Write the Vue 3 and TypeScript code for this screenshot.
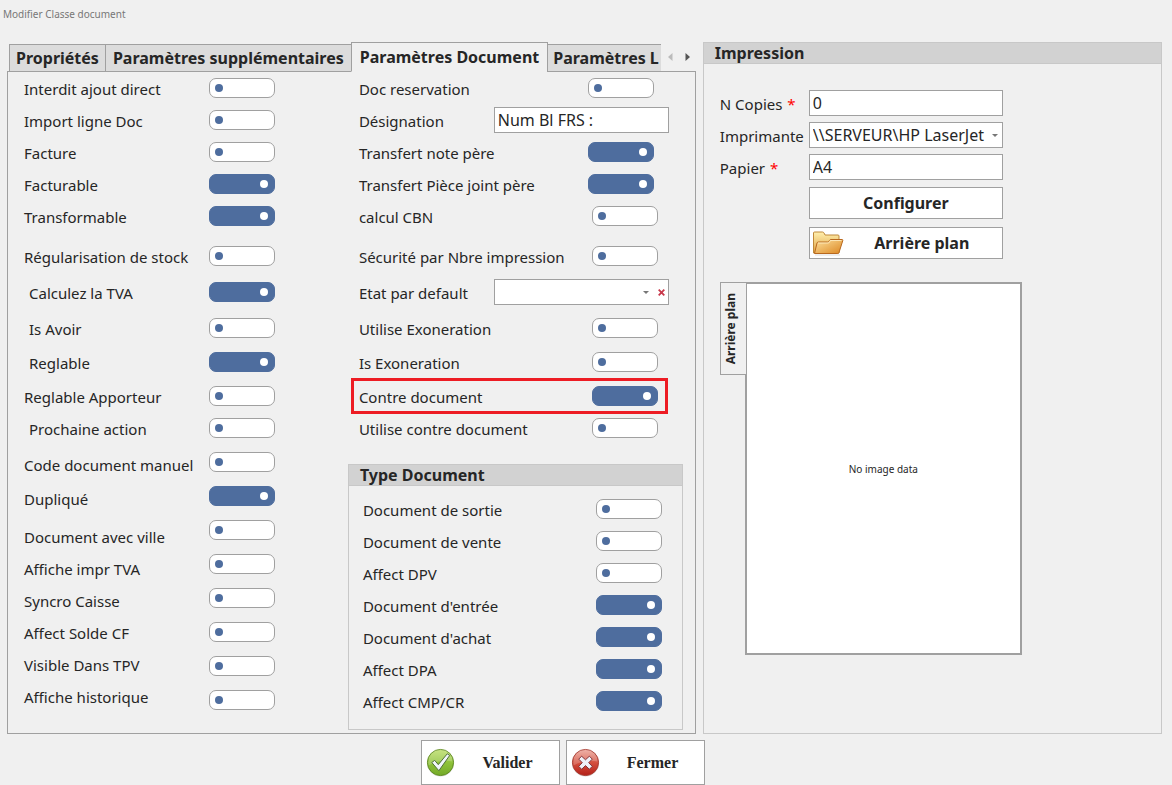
<script setup lang="ts">
import { reactive, ref } from 'vue'

type Gap = 'none' | 'xs' | 'sm' | 'md' | 'lg' | 'xl'

interface Option {
  id: string
  label: string
  on: boolean
  labelGap: Gap
  toggleGap: Gap
  indent?: boolean
}

interface Row {
  id: string
  label: string
  kind: 'toggle' | 'text' | 'combo'
  on: boolean
  gap: Gap
  wide?: boolean
  highlight?: boolean
}

const options = reactive<Option[]>([
  { id: 'interdit', label: 'Interdit ajout direct', on: false, labelGap: 'none', toggleGap: 'none' },
  { id: 'import', label: 'Import ligne Doc', on: false, labelGap: 'xs', toggleGap: 'xs' },
  { id: 'facture', label: 'Facture', on: false, labelGap: 'xs', toggleGap: 'xs' },
  { id: 'facturable', label: 'Facturable', on: true, labelGap: 'xs', toggleGap: 'xs' },
  { id: 'transformable', label: 'Transformable', on: true, labelGap: 'xs', toggleGap: 'xs' },
  { id: 'regul', label: 'Régularisation de stock', on: false, labelGap: 'xl', toggleGap: 'xl' },
  { id: 'tva', label: 'Calculez la TVA', on: true, labelGap: 'md', toggleGap: 'md', indent: true },
  { id: 'avoir', label: 'Is Avoir', on: false, labelGap: 'md', toggleGap: 'md', indent: true },
  { id: 'reglable', label: 'Reglable', on: true, labelGap: 'sm', toggleGap: 'sm', indent: true },
  { id: 'apporteur', label: 'Reglable Apporteur', on: false, labelGap: 'sm', toggleGap: 'sm' },
  { id: 'prochaine', label: 'Prochaine action', on: false, labelGap: 'xs', toggleGap: 'xs', indent: true },
  { id: 'code', label: 'Code document manuel', on: false, labelGap: 'md', toggleGap: 'sm' },
  { id: 'duplique', label: 'Dupliqué', on: true, labelGap: 'sm', toggleGap: 'sm' },
  { id: 'ville', label: 'Document avec ville', on: false, labelGap: 'lg', toggleGap: 'sm' },
  { id: 'impr', label: 'Affiche impr TVA', on: false, labelGap: 'xs', toggleGap: 'sm' },
  { id: 'syncro', label: 'Syncro Caisse', on: false, labelGap: 'xs', toggleGap: 'sm' },
  { id: 'solde', label: 'Affect Solde CF', on: false, labelGap: 'xs', toggleGap: 'sm' },
  { id: 'tpv', label: 'Visible Dans TPV', on: false, labelGap: 'xs', toggleGap: 'sm' },
  { id: 'historique', label: 'Affiche historique', on: false, labelGap: 'xs', toggleGap: 'sm' },
])

const rows = reactive<Row[]>([
  { id: 'reservation', label: 'Doc reservation', kind: 'toggle', on: false, gap: 'none', wide: true },
  { id: 'designation', label: 'Désignation', kind: 'text', on: false, gap: 'xs' },
  { id: 'note', label: 'Transfert note père', kind: 'toggle', on: true, gap: 'xs', wide: true },
  { id: 'piece', label: 'Transfert Pièce joint père', kind: 'toggle', on: true, gap: 'xs', wide: true },
  { id: 'cbn', label: 'calcul CBN', kind: 'toggle', on: false, gap: 'xs' },
  { id: 'securite', label: 'Sécurité par Nbre impression', kind: 'toggle', on: false, gap: 'xl' },
  { id: 'etat', label: 'Etat par default', kind: 'combo', on: false, gap: 'md' },
  { id: 'utilise-exo', label: 'Utilise Exoneration', kind: 'toggle', on: false, gap: 'md' },
  { id: 'is-exo', label: 'Is Exoneration', kind: 'toggle', on: false, gap: 'sm' },
  { id: 'contre', label: 'Contre document', kind: 'toggle', on: true, gap: 'sm', highlight: true },
  { id: 'utilise-contre', label: 'Utilise contre document', kind: 'toggle', on: false, gap: 'xs' },
])

const types = reactive([
  { id: 'sortie', label: 'Document de sortie', on: false },
  { id: 'vente', label: 'Document de vente', on: false },
  { id: 'dpv', label: 'Affect DPV', on: false },
  { id: 'entree', label: "Document d'entrée", on: true },
  { id: 'achat', label: "Document d'achat", on: true },
  { id: 'dpa', label: 'Affect DPA', on: true },
  { id: 'cmp', label: 'Affect CMP/CR', on: true },
])

const designation = ref('Num Bl FRS :')
const etat = ref('')
const copies = ref('0')
const printer = ref('\\\\SERVEUR\\HP LaserJet')
const paper = ref('A4')
</script>

<template>
  <main class="window">
    <h1 class="title">Modifier Classe document</h1>

    <div class="columns">
      <section class="settings">
        <div class="tabbar">
          <div class="tabs" role="tablist">
            <button class="tab" type="button" role="tab" aria-selected="false">Propriétés</button>
            <button class="tab" type="button" role="tab" aria-selected="false">Paramètres supplémentaires</button>
            <button class="tab active" type="button" role="tab" aria-selected="true">Paramètres Document</button>
            <button class="tab" type="button" role="tab" aria-selected="false">Paramètres L</button>
          </div>
          <div class="scrollers">
            <button class="scroller dim" type="button" aria-label="Onglet précédent">
              <svg width="5" height="8" viewBox="0 0 5 8"><path d="M4.5 0v8L0 4z" fill="currentColor" /></svg>
            </button>
            <button class="scroller" type="button" aria-label="Onglet suivant">
              <svg width="5" height="8" viewBox="0 0 5 8"><path d="M.5 0v8L5 4z" fill="currentColor" /></svg>
            </button>
          </div>
        </div>

        <div class="panel" role="tabpanel">
          <div class="left">
            <div class="stack">
              <label
                v-for="o in options"
                :key="o.id"
                :for="o.id"
                class="cell text"
                :class="['gap-' + o.labelGap, { indent: o.indent }]"
              >{{ o.label }}</label>
            </div>
            <div class="stack">
              <div v-for="o in options" :key="o.id" class="cell" :class="'gap-' + o.toggleGap">
                <input :id="o.id" v-model="o.on" class="toggle" type="checkbox" />
              </div>
            </div>
          </div>

          <div class="middle">
            <div class="rows">
              <div
                v-for="r in rows"
                :key="r.id"
                class="row"
                :class="['gap-' + r.gap, { highlight: r.highlight, wide: r.wide }]"
              >
                <label class="text" :for="r.id">{{ r.label }}</label>
                <input v-if="r.kind === 'toggle'" :id="r.id" v-model="r.on" class="toggle" type="checkbox" />
                <input v-else-if="r.kind === 'text'" :id="r.id" v-model="designation" class="field" type="text" />
                <div v-else class="combo">
                  <select :id="r.id" v-model="etat" class="field">
                    <option value=""></option>
                  </select>
                  <svg class="caret with-clear" width="6" height="3" viewBox="0 0 6 3"><path d="M0 0h6L3 3z" fill="#777" /></svg>
                  <button class="clear" type="button" aria-label="Effacer">
                    <svg width="7" height="7" viewBox="0 0 7 7"><path d="M.7.7l5.600 5.600M6.300.7L.7 6.300" stroke="#c8384a" stroke-width="1.800" /></svg>
                  </button>
                </div>
              </div>
            </div>

            <section class="group type-group">
              <h2 class="group-title">Type Document</h2>
              <div class="type-rows">
                <div v-for="t in types" :key="t.id" class="type-row">
                  <label class="text" :for="t.id">{{ t.label }}</label>
                  <input :id="t.id" v-model="t.on" class="toggle" type="checkbox" />
                </div>
              </div>
            </section>
          </div>
        </div>
      </section>

      <section class="group printing">
        <h2 class="group-title">Impression</h2>
        <div class="print-body">
          <div class="form">
            <label class="text" for="copies">N Copies <span class="req">*</span></label>
            <input id="copies" v-model="copies" class="field" type="text" />
            <label class="text" for="printer">Imprimante</label>
            <div class="combo">
              <select id="printer" v-model="printer" class="field">
                <option>\\SERVEUR\HP LaserJet</option>
              </select>
              <svg class="caret" width="6" height="3" viewBox="0 0 6 3"><path d="M0 0h6L3 3z" fill="#777" /></svg>
            </div>
            <label class="text" for="paper">Papier <span class="req">*</span></label>
            <input id="paper" v-model="paper" class="field" type="text" />
            <div class="buttons">
              <button class="button" type="button">Configurer</button>
              <button class="button with-icon" type="button">
                <svg width="32" height="26" viewBox="0 0 32 26">
                  <defs>
                    <linearGradient id="folder-back" x1="0" y1="0" x2="0" y2="1">
                      <stop offset="0" stop-color="#fff0ae" /><stop offset="1" stop-color="#e0a040" />
                    </linearGradient>
                    <linearGradient id="folder-front" x1="0" y1="0" x2="1" y2="1">
                      <stop offset="0" stop-color="#fde3a0" /><stop offset="1" stop-color="#dc8620" />
                    </linearGradient>
                  </defs>
                  <path d="M2 25h25" stroke="#ddd" stroke-width="1" />
                  <path d="M.5 23V3q0-1 1-1h8q1 0 1.500 1l1 2h13q1 0 1 1v17z" fill="url(#folder-back)" stroke="#bf8838" />
                  <path d="M1.500 23.500L4 13q.3-1 1.500-1h9q1 0 1.500-.8l.6-.9q.4-.8 1.400-.8h11q1 0 .8 1L26 22.500q-.3 1-1.300 1z" fill="url(#folder-front)" stroke="#b8681e" />
                  <path d="M5 13h10q1 0 1.600-1l.6-1.500H28.500" fill="none" stroke="#fff0c8" stroke-width=".8" />
                </svg>
                <span>Arrière plan</span>
              </button>
            </div>
          </div>

          <div class="preview">
            <button class="side-tab" type="button"><span>Arrière plan</span></button>
            <div class="canvas">No image data</div>
          </div>
        </div>
      </section>
    </div>

    <footer class="actions">
      <button class="action" type="button">
        <svg width="29" height="29" viewBox="0 0 30 30">
          <defs>
            <linearGradient id="ok" x1="0" y1="0" x2="0" y2="1">
              <stop offset="0" stop-color="#b9dc62" /><stop offset=".5" stop-color="#8fc23a" /><stop offset="1" stop-color="#74aa28" />
            </linearGradient>
          </defs>
          <circle cx="15" cy="15.500" r="14" fill="#ddd" />
          <circle cx="15" cy="15" r="13.500" fill="url(#ok)" stroke="#5f8b20" />
          <path d="M2.500 14a12.500 12.500 0 0 1 25 0q-12-3-25 4z" fill="#fff" opacity=".2" />
          <path d="M6 15l3-2.200 3.700 4.400L22 6l2.500 1.700L13.300 23.500z" fill="#f1f6fa" stroke="#4c6c35" stroke-linejoin="round" />
        </svg>
        <span>Valider</span>
      </button>
      <button class="action" type="button">
        <svg width="29" height="29" viewBox="0 0 30 30">
          <defs>
            <linearGradient id="ko" x1="0" y1="0" x2="0" y2="1">
              <stop offset="0" stop-color="#eba093" /><stop offset=".5" stop-color="#d4503f" /><stop offset="1" stop-color="#b42018" />
            </linearGradient>
          </defs>
          <circle cx="15" cy="15.500" r="14" fill="#ddd" />
          <circle cx="15" cy="15" r="13.500" fill="url(#ko)" stroke="#a83a30" />
          <path d="M2.500 14a12.500 12.500 0 0 1 25 0q-12-3-25 4z" fill="#fff" opacity=".2" />
          <path d="M11 8.500l4 3.700 4-3.700 3 3-3.700 3.700 3.700 3.800-3 3-4-3.800-4 3.800-3-3 3.700-3.800L8 11.500z" fill="#eef2f8" stroke="#7f3338" stroke-linejoin="round" />
        </svg>
        <span>Fermer</span>
      </button>
    </footer>
  </main>
</template>

<style>
body {
  margin: 0;
  background: #f0f0f0;
}
</style>

<style scoped>
.window {
  box-sizing: border-box;
  padding: 6px 10px 0 7px;
  color: #262626;
  font: 15px/20px "Noto Sans", "Open Sans", sans-serif;
}

.window *,
.window *::before,
.window *::after {
  box-sizing: border-box;
}

button,
input,
select {
  margin: 0;
  font: inherit;
  color: inherit;
}

button {
  padding: 0;
}

.title {
  margin: 0 0 0 -4px;
  font-size: 10px;
  font-weight: 400;
  line-height: 16px;
  color: #777;
}

.columns {
  display: grid;
  grid-template-columns: minmax(0, 3fr) minmax(0, 2fr);
  gap: 7px;
  margin-top: 20px;
}

.settings {
  display: flex;
  flex-direction: column;
}

.tabbar {
  position: relative;
  display: flex;
  justify-content: space-between;
  height: 30px;
  margin-bottom: -1px;
  padding-left: 2px;
}

.tabs {
  display: flex;
  flex: 1;
  align-items: flex-end;
  min-width: 0;
  overflow: hidden;
}

.tab {
  flex: none;
  height: 28px;
  padding: 0 7px;
  border: 1px solid #a0a0a0;
  background: #dcdcdc;
  font-size: 16px;
  font-weight: 700;
  white-space: nowrap;
}

.tab + .tab {
  margin-left: -1px;
}

.tab:first-child {
  padding: 0 6px;
}

.tab:last-child {
  padding: 0 20px 0 5px;
}

.tab.active {
  height: 30px;
  padding: 0 8px;
  border-bottom-color: #f0f0f0;
  background: #f0f0f0;
}

.scrollers {
  display: flex;
  flex: none;
  align-items: center;
  gap: 12px;
  padding: 0 6px 0 7px;
}

.scroller {
  display: flex;
  border: 0;
  background: none;
  color: #555;
}

.scroller.dim {
  color: #bbb;
}

.panel {
  display: grid;
  grid-template-columns: minmax(0, 340fr) minmax(0, 347fr);
  flex: 1;
  border: 1px solid #a0a0a0;
  padding-top: 3px;
}

.left {
  display: grid;
  grid-template-columns: 186px 66px;
  align-content: start;
  padding-left: 15px;
}

.cell,
.row {
  display: flex;
  align-items: center;
  height: 26px;
}

.text {
  padding-top: 1px;
  white-space: nowrap;
}

.panel .text {
  padding-left: 1px;
}

.panel .indent {
  padding-left: 6px;
}

.gap-xs {
  margin-top: 6px;
}

.gap-sm {
  margin-top: 8px;
}

.gap-md {
  margin-top: 10px;
}

.gap-lg {
  margin-top: 12px;
}

.gap-xl {
  margin-top: 14px;
}

.toggle {
  appearance: none;
  display: flex;
  flex: none;
  align-items: center;
  width: 66px;
  height: 20px;
  padding: 0 5px;
  border: 1px solid #a0a0a0;
  border-radius: 7px;
  background: #fff;
}

.toggle::before {
  content: "";
  width: 8px;
  height: 8px;
  border-radius: 50%;
  background: #4e6d9e;
}

.toggle:checked {
  justify-content: flex-end;
  padding: 0 6px;
  border-color: #4e6d9e;
  background: #4e6d9e;
}

.toggle:checked::before {
  background: #fff;
}

.middle {
  display: flex;
  flex-direction: column;
  padding: 0 12px 3px 0;
}

.rows {
  padding: 0 14px 0 10px;
}

.row {
  position: relative;
  justify-content: space-between;
}

.row .toggle {
  margin-right: 11px;
}

.row.wide .toggle {
  margin-right: 15px;
}

.row > .field,
.row > .combo {
  width: 175px;
}

.highlight::after {
  content: "";
  position: absolute;
  inset: -5px 1px -5px -7px;
  border: 3px solid #ed1c24;
  pointer-events: none;
}

.field {
  display: block;
  width: 100%;
  height: 26px;
  padding: 0 3px;
  border: 1px solid #a0a0a0;
  border-radius: 0;
  background: #fff;
  font-size: 16px;
  appearance: none;
}

.combo {
  position: relative;
}

.caret {
  position: absolute;
  top: 12px;
  right: 5px;
  pointer-events: none;
}

.caret.with-clear {
  right: 20px;
}

.clear {
  position: absolute;
  top: 10px;
  right: 4px;
  display: flex;
  border: 0;
  background: none;
}

.group {
  border: 1px solid #c8c8c8;
}

.group-title {
  margin: 0;
  padding: 0 11px;
  border-bottom: 1px solid #c8c8c8;
  background: #d2d2d2;
  font-size: 16px;
  font-weight: 700;
  line-height: 20px;
}

.type-group {
  margin-top: 23px;
}

.type-rows {
  display: grid;
  gap: 6px;
  padding: 10px 20px 15px 13px;
}

.type-row {
  display: flex;
  align-items: center;
  justify-content: space-between;
  height: 26px;
}

.print-body {
  padding: 26px 16px;
}

.form {
  display: grid;
  grid-template-columns: 89px 194px;
  gap: 6px 0;
  align-items: center;
}

.req {
  margin-left: 1px;
  color: #f00;
}

.buttons {
  display: grid;
  grid-column: 2;
  gap: 8px;
  padding-top: 1px;
}

.button,
.action {
  display: flex;
  align-items: center;
  justify-content: center;
  border: 1px solid #a0a0a0;
  background: #fff;
  font-size: 16px;
  font-weight: 700;
}

.button {
  height: 32px;
}

.with-icon {
  padding: 0 3px;
}

.with-icon span,
.action span {
  flex: 1;
  text-align: center;
}

.preview {
  display: flex;
  align-items: flex-start;
  max-width: 302px;
  margin-top: 23px;
}

.side-tab {
  position: relative;
  display: flex;
  align-items: center;
  justify-content: center;
  width: 27px;
  height: 93px;
  margin-right: -2px;
  padding-right: 4px;
  border: 1px solid #a0a0a0;
  background: #f0f0f0;
  font-size: 12px;
  font-weight: 700;
}

.side-tab span {
  writing-mode: vertical-rl;
  transform: rotate(180deg);
  white-space: nowrap;
}

.canvas {
  display: flex;
  flex: 1;
  align-items: center;
  justify-content: center;
  min-height: 373px;
  border: 2px solid #a0a0a0;
  background: #fff;
  font-size: 10px;
}

.actions {
  display: flex;
  gap: 6px;
  justify-content: center;
  margin-top: 6px;
  padding-right: 44px;
}

.action {
  gap: 6px;
  width: 139px;
  height: 45px;
  padding: 0 4px;
  font-family: "Liberation Serif", serif;
}
</style>
